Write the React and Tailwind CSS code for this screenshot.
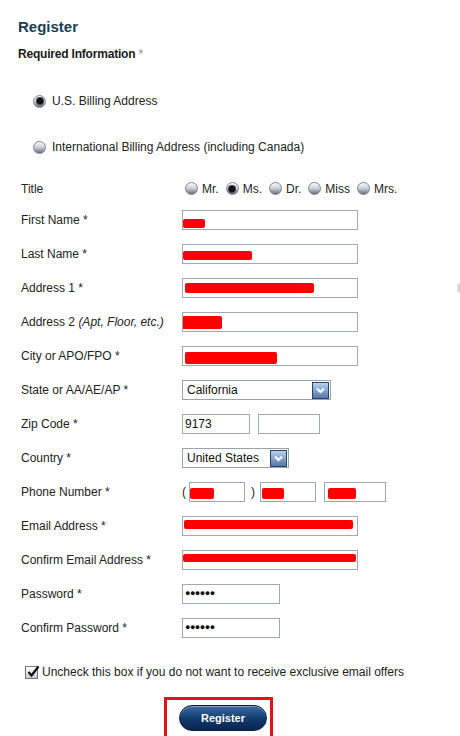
import React from 'react';

// Glossy grey radio like the old XP-era skin
function Radio({ checked = false }) {
  return (
    <span className="relative w-[13px] h-[13px] shrink-0 rounded-full border border-[#7c8591] bg-linear-to-b from-[#fbfcfd] via-[#c9ced5] to-[#66707c] flex items-center justify-center">
      {checked && <span className="w-[6px] h-[6px] rounded-full bg-[#111] ring-1 ring-[#3a3f46]" />}
    </span>
  );
}

function Redact({ left = 0, width, top = 0, height = 9 }) {
  return (
    <span
      className="block bg-[#ff0000] rounded-[2px] shrink-0"
      style={{ marginLeft: left, width, height, marginTop: top }}
    />
  );
}

function TextBox({ width = 176, children, value }) {
  return (
    <div
      className="h-[20px] border border-[#a0a8b0] bg-white flex items-center text-[12px] text-[#111] overflow-hidden"
      style={{ width }}
    >
      {value && <span className="pl-[2px]">{value}</span>}
      {children}
    </div>
  );
}

function SelectBox({ width, value }) {
  return (
    <div
      className="h-[20px] border border-[#9aa3ad] bg-white flex items-center justify-between pl-[4px] pr-[1px] text-[12px] text-[#111]"
      style={{ width }}
    >
      <span>{value}</span>
      <span className="w-[17px] h-[17px] border border-[#27456b] bg-linear-to-b from-[#b9d0ee] to-[#5579ab] flex items-center justify-center">
        <svg width="9" height="7" viewBox="0 0 9 7">
          <path d="M1 1.5 L4.5 5 L8 1.5" fill="none" stroke="#ffffff" strokeWidth="2" />
        </svg>
      </span>
    </div>
  );
}

function Row({ label, children }) {
  return (
    <div className="h-[34px] flex items-center">
      <div className="w-[161px] shrink-0 text-[12px] text-[#222]">{label}</div>
      <div className="flex items-center flex-1">{children}</div>
    </div>
  );
}

const titles = [
  { name: 'Mr.', checked: false },
  { name: 'Ms.', checked: true },
  { name: 'Dr.', checked: false },
  { name: 'Miss', checked: false },
  { name: 'Mrs.', checked: false },
];

function Dots() {
  return <span className="pl-[2px] text-[9px] font-bold tracking-[-0.5px] text-[#111]">●●●●●●</span>;
}

export default function App() {
  return (
    <div className="w-[460px] h-[736px] bg-white overflow-hidden text-[12px] text-[#222] font-['Liberation_Sans',Arial,sans-serif]">
      <h1 className="pl-[18px] pt-[18px] text-[15px] leading-[18px] font-bold text-[#1b3d52]">Register</h1>

      <div className="pl-[18px] mt-[11px] leading-[14px] font-bold text-[#1a1a1a] tracking-[-0.2px]">
        Required Information <span className="font-normal text-[#888]">*</span>
      </div>

      <div className="pl-[33px] mt-[33px] h-[14px] flex items-center gap-[6px]">
        <Radio checked />
        <span>U.S. Billing Address</span>
      </div>

      <div className="pl-[33px] mt-[32px] h-[14px] flex items-center gap-[6px]">
        <Radio />
        <span>International Billing Address (including Canada)</span>
      </div>

      <div className="pl-[21px] mt-[20px]">
        <div className="h-[29px] flex items-center">
          <div className="w-[161px] shrink-0">Title</div>
          <div className="flex items-center gap-[7px] pl-[3px]">
            {titles.map((t) => (
              <label key={t.name} className="flex items-center gap-[4px]">
                <Radio checked={t.checked} />
                <span>{t.name}</span>
              </label>
            ))}
          </div>
        </div>

        <Row label="First Name *">
          <TextBox>
            <Redact width={22} left={0} top={6} />
          </TextBox>
        </Row>
        <Row label="Last Name *">
          <TextBox>
            <Redact width={69} left={0} top={2} />
          </TextBox>
        </Row>
        <Row label="Address 1 *">
          <TextBox>
            <Redact width={129} left={2} top={0} height={10} />
          </TextBox>
          <span className="ml-auto w-[3px] h-[10px] rounded-l-full bg-[#dcdcdc]" />
        </Row>
        <Row label={<>Address 2 <i>(Apt, Floor, etc.)</i></>}>
          <TextBox>
            <Redact width={40} left={-1} top={1} height={13} />
          </TextBox>
        </Row>
        <Row label="City or APO/FPO *">
          <TextBox>
            <Redact width={92} left={2} top={3} height={12} />
          </TextBox>
        </Row>
        <Row label="State or AA/AE/AP *">
          <SelectBox width={149} value="California" />
        </Row>
        <Row label="Zip Code *">
          <TextBox width={68} value="9173" />
          <div className="ml-[8px]">
            <TextBox width={62} />
          </div>
        </Row>
        <Row label="Country *">
          <SelectBox width={107} value="United States" />
        </Row>
        <Row label="Phone Number *">
          <span className="w-[7px]">(</span>
          <TextBox width={56}>
            <Redact width={24} left={0} top={2} height={11} />
          </TextBox>
          <span className="w-[15px] pl-[6px]">)</span>
          <TextBox width={56}>
            <Redact width={22} left={1} top={2} height={11} />
          </TextBox>
          <div className="ml-[8px]">
            <TextBox width={62}>
              <Redact width={28} left={3} top={2} height={11} />
            </TextBox>
          </div>
        </Row>
        <Row label="Email Address *">
          <TextBox>
            <Redact width={169} left={1} top={-3} height={9} />
          </TextBox>
        </Row>
        <Row label="Confirm Email Address *">
          <TextBox>
            <Redact width={173} left={0} top={-5} height={8} />
          </TextBox>
        </Row>
        <Row label="Password *">
          <TextBox width={98}>
            <Dots />
          </TextBox>
        </Row>
        <Row label="Confirm Password *">
          <TextBox width={98}>
            <Dots />
          </TextBox>
        </Row>
      </div>

      <div className="pl-[25px] mt-[20px] h-[14px] flex items-center gap-[4px]">
        <span className="relative w-[13px] h-[13px] shrink-0 border border-[#6f7780] bg-linear-to-b from-[#ffffff] to-[#c6ccd3] flex items-center justify-center">
          <svg width="13" height="13" viewBox="0 0 13 13" className="absolute -top-[2px] left-[1px]">
            <path d="M1.5 7 L4.5 10.5 L11.5 1.5" fill="none" stroke="#111" strokeWidth="2.2" />
          </svg>
        </span>
        <span className="text-[#222]">Uncheck this box if you do not want to receive exclusive email offers</span>
      </div>

      <div className="ml-[164px] mt-[18px] w-[109px] h-[42px] border-[3px] border-[#e3131b] pl-[12px] pt-[5px]">
        <button className="w-[88px] h-[26px] rounded-full border border-[#0a1f40] bg-linear-to-b from-[#3d6ea5] via-[#123c70] to-[#0a2550] text-white text-[11px] font-bold shadow-[inset_0_1px_0_rgba(255,255,255,0.35)]">
          Register
        </button>
      </div>
    </div>
  );
}
